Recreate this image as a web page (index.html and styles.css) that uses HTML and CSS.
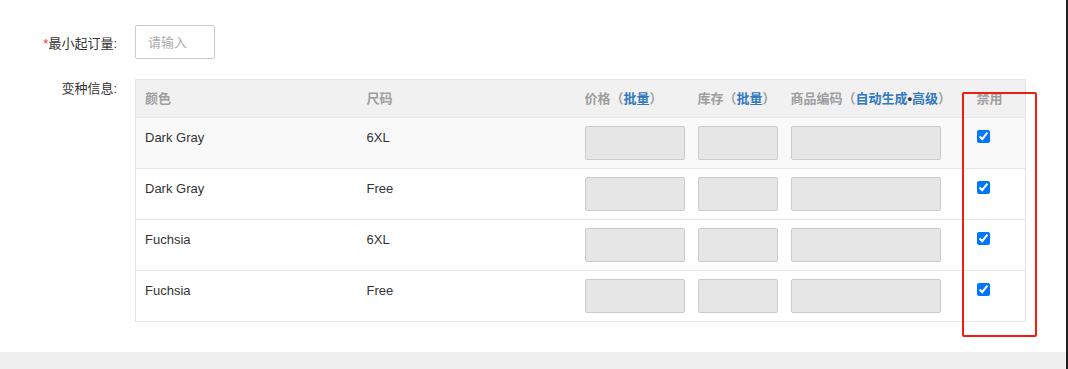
FILE: index.html
```html
<!DOCTYPE html>
<html lang="zh-CN">
<head>
<meta charset="utf-8">
<link rel="stylesheet" href="styles.css">
</head>
<body>
<div class="screen">
  <div class="page">
    <div class="form-row center">
      <label class="label label-first"><span class="req">*</span>最小起订量:</label>
      <input class="text-input" type="text" placeholder="请输入">
    </div>
    <div class="form-row">
      <label class="label">变种信息:</label>
      <table class="variants">
        <colgroup>
          <col class="c-color"><col class="c-size"><col class="c-price"><col class="c-stock"><col class="c-code"><col class="c-off">
        </colgroup>
        <thead>
          <tr>
            <th>颜色</th>
            <th>尺码</th>
            <th>价格（<a class="lnk">批量</a>）</th>
            <th>库存（<a class="lnk">批量</a>）</th>
            <th>商品编码（<a class="lnk">自动生成</a><span class="dot">•</span><a class="lnk">高级</a>）</th>
            <th>禁用</th>
          </tr>
        </thead>
        <tbody>
          <tr class="hover">
            <td><div class="cell-text">Dark Gray</div></td>
            <td><div class="cell-text">6XL</div></td>
            <td><input class="box w-price" type="text"></td>
            <td><input class="box w-stock" type="text"></td>
            <td><input class="box w-code" type="text"></td>
            <td><input class="chk" type="checkbox" checked></td>
          </tr>
          <tr>
            <td><div class="cell-text">Dark Gray</div></td>
            <td><div class="cell-text">Free</div></td>
            <td><input class="box w-price" type="text"></td>
            <td><input class="box w-stock" type="text"></td>
            <td><input class="box w-code" type="text"></td>
            <td><input class="chk" type="checkbox" checked></td>
          </tr>
          <tr>
            <td><div class="cell-text">Fuchsia</div></td>
            <td><div class="cell-text">6XL</div></td>
            <td><input class="box w-price" type="text"></td>
            <td><input class="box w-stock" type="text"></td>
            <td><input class="box w-code" type="text"></td>
            <td><input class="chk" type="checkbox" checked></td>
          </tr>
          <tr>
            <td><div class="cell-text">Fuchsia</div></td>
            <td><div class="cell-text">Free</div></td>
            <td><input class="box w-price" type="text"></td>
            <td><input class="box w-stock" type="text"></td>
            <td><input class="box w-code" type="text"></td>
            <td><input class="chk" type="checkbox" checked></td>
          </tr>
        </tbody>
      </table>
    </div>
    <div class="highlight"></div>
  </div>
  <div class="band"></div>
</div>
</body>
</html>
```

FILE: styles.css
```css
html, body {
  margin: 0;
  padding: 0;
  background: #ffffff;
}
body {
  font-family: "Liberation Sans", "Noto Sans CJK SC", sans-serif;
  font-size: 13px;
  color: #333;
}
.screen {
  width: 1066px;
  height: 369px;
  border-right: 2px solid #1e1e1e;
  display: flex;
  flex-direction: column;
}
.page {
  position: relative;
  height: 352px;
  box-sizing: border-box;
  padding-top: 25px;
  background: #fff;
}
.band {
  flex: 1;
  background: #f0f0f0;
}
.form-row {
  display: flex;
  align-items: flex-start;
  margin-bottom: 20px;
}
.form-row.center {
  align-items: center;
}
.label {
  width: 117px;
  flex: none;
  text-align: right;
  padding-right: 18px;
  line-height: 20px;
  color: #333;
}
.label-first {
  padding-top: 3px;
}
.req {
  color: #f04134;
}
.text-input {
  box-sizing: border-box;
  width: 80px;
  height: 34px;
  border: 1px solid #ccc;
  border-radius: 2px;
  padding: 0 12px;
  font: inherit;
  font-size: 13px;
  color: #333;
  outline: none;
}
.text-input::placeholder {
  color: #aaa;
}
.variants {
  border-collapse: collapse;
  table-layout: fixed;
  width: 890px;
  border: 1px solid #e3e3e3;
}
.c-color { width: 222px; }
.c-size { width: 218px; }
.c-price { width: 113px; }
.c-stock { width: 93px; }
.c-code { width: 186px; }
.c-off { width: 58px; }
.variants th {
  height: 38px;
  padding: 0 10px 0 9px;
  background: #f1f1f1;
  color: #9e9e9e;
  font-weight: bold;
  text-align: left;
  white-space: nowrap;
  border-bottom: 1px solid #e6e6e6;
  line-height: 20px;
  box-sizing: border-box;
}
.lnk {
  color: #3279c0;
}
.dot {
  color: #333;
}
.variants td {
  height: 50px;
  padding: 8px 10px 8px 9px;
  box-sizing: border-box;
  vertical-align: top;
  border-bottom: 1px solid #e6e6e6;
  background: #fff;
}
.variants tr.hover td {
  background: #f9f9f9;
}
.cell-text {
  padding-top: 2px;
  line-height: 20px;
  color: #333;
}
.box {
  display: block;
  box-sizing: border-box;
  height: 34px;
  margin: 0;
  border: 1px solid #cbcbcb;
  border-radius: 2px;
  background: #e6e6e6;
  outline: none;
}
.w-price { width: 100px; }
.w-stock { width: 80px; }
.w-code { width: 150px; }
.chk {
  display: block;
  margin: 4px 0 0 0;
  width: 13px;
  height: 13px;
}
.highlight {
  position: absolute;
  left: 962px;
  top: 92px;
  width: 75px;
  height: 245px;
  box-sizing: border-box;
  border: 2px solid #f41b10;
  border-radius: 2px;
  pointer-events: none;
}
```
